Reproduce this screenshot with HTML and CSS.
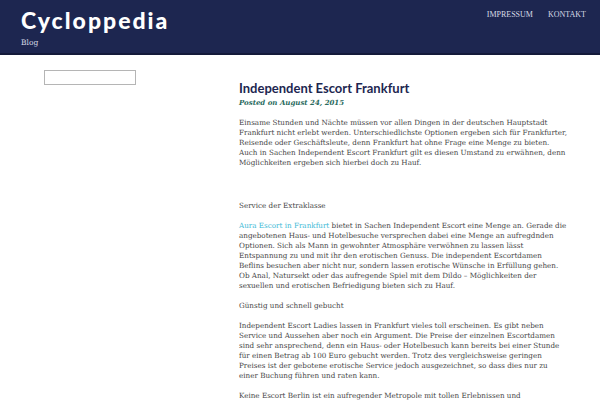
FILE: index.html
```html
<!DOCTYPE html>
<html lang="de">
<head>
<meta charset="utf-8">
<title>Cycloppedia</title>
<link rel="stylesheet" href="styles.css">
</head>
<body>
<header class="site-header">
  <div class="branding">
    <div class="site-title">Cycloppedia</div>
    <div class="site-desc">Blog</div>
  </div>
  <nav class="menu">
    <a href="#">IMPRESSUM</a>
    <a href="#">KONTAKT</a>
  </nav>
</header>
<div class="wrap">
  <aside class="sidebar">
    <input class="search" type="text">
  </aside>
  <main class="content">
    <h1 class="entry-title">Independent Escort Frankfurt</h1>
    <div class="posted">Posted on August 24, 2015</div>
    <p>Einsame Stunden und Nächte müssen vor allen Dingen in der deutschen Hauptstadt Frankfurt nicht erlebt werden. Unterschiedlichste Optionen ergeben sich für Frankfurter, Reisende oder Geschäftsleute, denn Frankfurt hat ohne Frage eine Menge zu bieten. Auch in Sachen Independent Escort Frankfurt gilt es diesen Umstand zu erwähnen, denn Möglichkeiten ergeben sich hierbei doch zu Hauf.</p>
    <p class="gap">Service der Extraklasse</p>
    <p><a href="#">Aura Escort in Frankfurt</a> bietet in Sachen Independent Escort eine Menge an. Gerade die angebotenen Haus- und Hotelbesuche versprechen dabei eine Menge an aufregdnden Optionen. Sich als Mann in gewohnter Atmosphäre verwöhnen zu lassen lässt Entspannung zu und mit ihr den erotischen Genuss. Die independent Escortdamen Beflins besuchen aber nicht nur, sondern lassen erotische Wünsche in Erfüllung gehen. Ob Anal, Natursekt oder das aufregende Spiel mit dem Dildo – Möglichkeiten der sexuellen und erotischen Befriedigung bieten sich zu Hauf.</p>
    <p>Günstig und schnell gebucht</p>
    <p>Independent Escort Ladies lassen in Frankfurt vieles toll erscheinen. Es gibt neben Service und Aussehen aber noch ein Argument. Die Preise der einzelnen Escortdamen sind sehr ansprechend, denn ein Haus- oder Hotelbesuch kann bereits bei einer Stunde für einen Betrag ab 100 Euro gebucht werden. Trotz des vergleichsweise geringen Preises ist der gebotene erotische Service jedoch ausgezeichnet, so dass dies nur zu einer Buchung führen und raten kann.</p>
    <p>Keine Escort Berlin ist ein aufregender Metropole mit tollen Erlebnissen und Möglichkeiten. Die Damen sind immer für Sie da.</p>
  </main>
</div>
</body>
</html>
```
FILE: styles.css
```css
html, body {
  margin: 0;
  padding: 0;
  background: #ffffff;
}
body {
  font-family: "DejaVu Serif", serif;
  color: #444444;
}
.site-header {
  background: #1d2650;
  border-bottom: 2px solid #141a3a;
  height: 53px;
  display: flex;
  justify-content: space-between;
  align-items: flex-start;
  padding: 0 14px 0 21px;
}
.branding {
  padding-top: 7px;
}
.site-title {
  font-family: "Lato", sans-serif;
  font-weight: 900;
  font-size: 23px;
  line-height: 26px;
  color: #ffffff;
  letter-spacing: 2px;
}
.site-desc {
  font-family: "DejaVu Serif", serif;
  font-size: 7.5px;
  line-height: 10px;
  color: #d8dbe6;
  margin-top: 5px;
}
.menu {
  display: flex;
  gap: 15px;
  padding-top: 10px;
}
.menu a {
  font-family: "Liberation Serif", serif;
  font-size: 8px;
  line-height: 10px;
  color: #d8dbe6;
  text-decoration: none;
}
.wrap {
  display: flex;
  padding: 15px 0 0 44px;
}
.sidebar {
  width: 195px;
  flex: none;
}
.search {
  display: block;
  box-sizing: border-box;
  width: 92px;
  height: 15px;
  border: 1px solid #b5b5b5;
  margin: 0;
  padding: 0;
}
.content {
  width: 328px;
  flex: none;
}
.entry-title {
  font-family: "Lato", sans-serif;
  font-weight: 700;
  font-size: 13px;
  line-height: 16px;
  color: #1d2650;
  margin: 10px 0 0 0;
}
.posted {
  font-family: "DejaVu Serif", serif;
  font-style: italic;
  font-weight: bold;
  font-size: 7px;
  line-height: 10px;
  color: #2a6b5e;
  margin: 2px 0 10px 0;
}
p {
  font-size: 7.2px;
  line-height: 10px;
  margin: 0 0 10px 0;
}
p.gap {
  margin-top: 33px;
}
a {
  color: #3bb9d6;
  text-decoration: none;
}
```
